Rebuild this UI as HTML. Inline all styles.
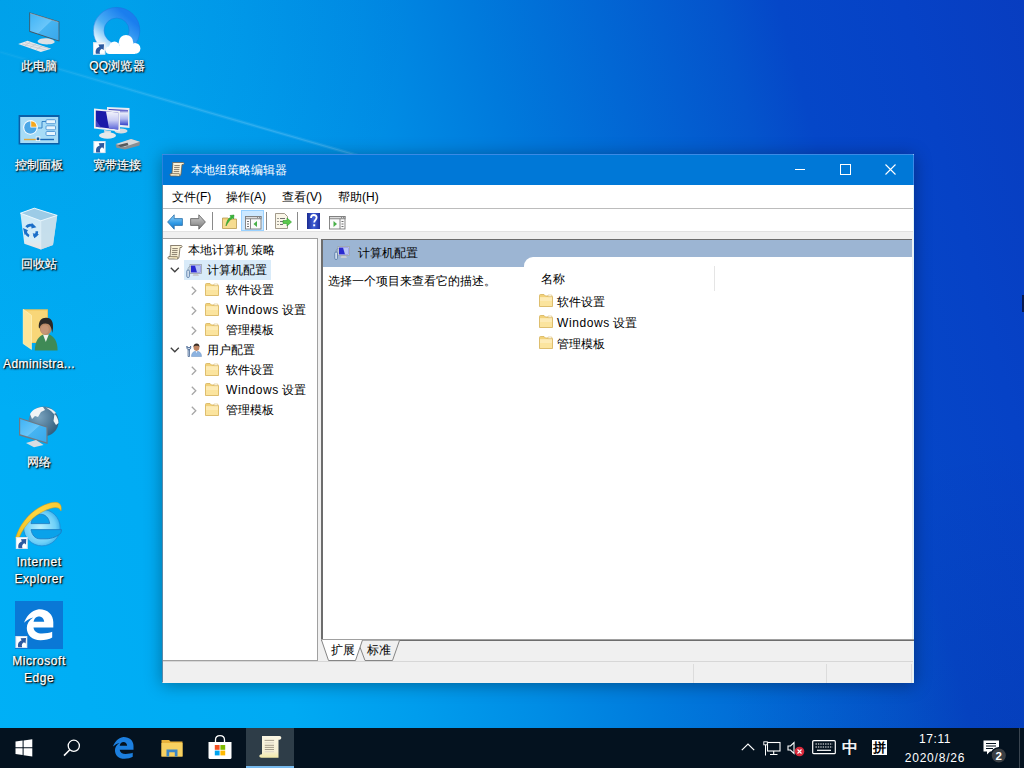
<!DOCTYPE html>
<html><head><meta charset="utf-8">
<style>
*{margin:0;padding:0;box-sizing:border-box}
html,body{width:1024px;height:768px;overflow:hidden}
body{position:relative;font-family:"Liberation Sans",sans-serif;font-size:12px;color:#000;background:#0a78d8}
#bg{position:absolute;left:0;top:0;width:1024px;height:768px;
background:radial-gradient(circle at 0 0,rgba(0,30,110,.08),rgba(0,30,110,0) 420px),radial-gradient(circle at 100% 96%,rgba(0,10,90,.10),rgba(0,10,90,0) 300px),
linear-gradient(75deg,#00b0f6 0%,#00aaf3 25%,#009ded 35%,#008de5 45%,#007adc 55%,#0267d4 65%,#0454cc 75%,#0547c8 80%,#0642c6 90%,#083dc0 100%)}
svg{position:absolute;overflow:visible}
.dl{position:absolute;color:#fff;font-size:12px;line-height:17px;text-align:center;width:80px;white-space:nowrap;
text-shadow:1px 1px 1px #000,1px 1px 2px rgba(0,0,0,.9),0 0 3px rgba(0,0,0,.45);-webkit-text-stroke:0.25px #fff}
#win{position:absolute;left:162px;top:154px;width:752px;height:529px;background:#f0f0f0;border:1px solid #dff4fa;border-left-color:#5a88a8;border-top-color:#3a8ae6;
box-shadow:0 2px 16px rgba(0,0,0,.35)}
#title{position:absolute;left:0;top:0;width:750px;height:30px;background:#0078d7;color:#fff}
#menu{position:absolute;left:0;top:30px;width:750px;height:24px;background:#fff;border-bottom:1px solid #bcbcbc}
#tool{position:absolute;left:0;top:54px;width:750px;height:23px;background:#fff;border-bottom:1px solid #e2e2e2}
#tree{position:absolute;left:0;top:83px;width:155px;height:423px;background:#fff;border:1px solid #a0a0a0;border-left:none}
#right{position:absolute;left:158px;top:84px;width:591px;height:402px;background:#fff;border-left:2px solid #6d6d6d;border-top:1px solid #6d6d6d;overflow:hidden}
#status{position:absolute;left:0;top:506px;width:750px;height:22px;background:#f0f0f0;border-top:1px solid #d7d7d7}
.t{position:absolute;white-space:nowrap;line-height:16px}
#taskbar{position:absolute;left:0;top:728px;width:1024px;height:40px;background:#04121f}
</style></head>
<body>
<div id="bg"></div>
<svg width="1024" height="768" style="left:0;top:0"><defs><linearGradient id="bm" gradientUnits="userSpaceOnUse" x1="0" y1="52" x2="380" y2="162"><stop offset="0" stop-color="#d2f0ff" stop-opacity=".06"/><stop offset=".45" stop-color="#d2f0ff" stop-opacity=".22"/><stop offset="1" stop-color="#d2f0ff" stop-opacity=".26"/></linearGradient></defs><path d="M0 52 L380 162" stroke="url(#bm)" stroke-width="3.5" opacity=".4"/><path d="M0 52 L380 162" stroke="url(#bm)" stroke-width="1.2" opacity=".65"/></svg>
<svg width="1024" height="728" style="left:0;top:0" viewBox="0 0 1024 728">
<defs>
 <symbol id="sc" viewBox="0 0 12 12">
  <rect x="0" y="0" width="12" height="12" fill="#fff"/>
  <rect x="0.5" y="0.5" width="11" height="11" fill="none" stroke="#d8e4f0" stroke-width="1"/>
  <path d="M2.8 11.2 C2 7.5 3.5 5.2 6.2 4.4 L5.2 2.2 L10.6 2 L10.2 7.6 L8.6 6.2 C6.8 7 5.8 9 6.8 11.2 Z" fill="#2d5aa0"/>
 </symbol>
 <linearGradient id="scr" x1="0" y1="0" x2="1" y2="1"><stop offset="0" stop-color="#3fb3f5"/><stop offset="0.5" stop-color="#69c6fa"/><stop offset="0.52" stop-color="#45b4f2"/><stop offset="1" stop-color="#3aa8ea"/></linearGradient>
 <linearGradient id="qqr" x1="0.1" y1="0.9" x2="0.8" y2="0.1"><stop offset="0" stop-color="#e6f6ff"/><stop offset="0.45" stop-color="#4aaef5"/><stop offset="1" stop-color="#1a7eee"/></linearGradient>
 <linearGradient id="bin" x1="0" y1="0" x2="0" y2="1"><stop offset="0" stop-color="#c9e8f6"/><stop offset="0.75" stop-color="#d6eef8"/><stop offset="1" stop-color="#f0e2e0"/></linearGradient>
 <linearGradient id="ier" x1="0" y1="1" x2="1" y2="0"><stop offset="0" stop-color="#f0c020"/><stop offset="0.6" stop-color="#ffd740"/><stop offset="1" stop-color="#f8c830"/></linearGradient>
 <radialGradient id="iee" cx="0.45" cy="0.5" r="0.6"><stop offset="0" stop-color="#b8f0ff"/><stop offset="0.7" stop-color="#6ed0f8"/><stop offset="1" stop-color="#2aa8e8"/></radialGradient>
 <radialGradient id="glb" cx="0.35" cy="0.35" r="0.75"><stop offset="0" stop-color="#7aa4bf"/><stop offset="1" stop-color="#2f5a7a"/></radialGradient>
 <linearGradient id="fgl" x1="0" y1="0" x2="0" y2="1"><stop offset="0" stop-color="#f4f4fc"/><stop offset="0.5" stop-color="#c8ccf4"/><stop offset="1" stop-color="#5a64d8"/></linearGradient>
 <linearGradient id="bsc" x1="0" y1="0" x2="0" y2="1"><stop offset="0" stop-color="#2020b0"/><stop offset="0.25" stop-color="#e8ecfa"/><stop offset="0.6" stop-color="#b0b8f0"/><stop offset="1" stop-color="#3040c8"/></linearGradient>
 <linearGradient id="fsc" x1="0" y1="0" x2="1" y2="1"><stop offset="0" stop-color="#1010b0"/><stop offset="0.55" stop-color="#2030d0"/><stop offset="0.56" stop-color="#c8d0f8"/><stop offset="1" stop-color="#6070e0"/></linearGradient>
</defs>

<!-- This PC -->
<path d="M29.3 12.2 L59.4 21.5 L59.4 41.5 L29.3 31.8 Z" fill="#46535e"/>
<path d="M30.1 13.3 L58.6 22.2 L58.6 40.4 L30.1 31 Z" fill="url(#scr)"/>
<path d="M30.1 13.3 L58.6 22.2" stroke="#a8b4bc" stroke-width="0.6"/>
<path d="M38 40.5 C40 38 47 37.5 52 39.5 C55 40.8 55.5 42.5 53 43.5 C49 45 42 44.5 39 43 C37.5 42.2 37.3 41.2 38 40.5 Z" fill="#dde1e5"/>
<path d="M18.2 44 L27.5 40.8 L51.2 48.7 L40.8 51.9 Z" fill="#e4e8ec"/>
<path d="M22 44 L46 50 M25 42.5 L49 48.5 M30 42 L25 46 M36 44 L30 47.5 M42 46 L36 49.5" stroke="#b8c0c8" stroke-width="0.6" fill="none"/>

<!-- QQ browser -->
<circle cx="116.6" cy="30.6" r="17.9" fill="none" stroke="url(#qqr)" stroke-width="10.8"/>
<circle cx="116.6" cy="30.6" r="23.2" fill="none" stroke="#1a72d8" stroke-width="0.7" opacity=".6"/>
<circle cx="116.6" cy="30.6" r="12.6" fill="none" stroke="#1a72d8" stroke-width="0.7" opacity=".6"/>
<g fill="#fff"><circle cx="126" cy="42.2" r="7.2"/><circle cx="135" cy="48.4" r="5.4"/><circle cx="114.5" cy="47" r="5.4"/><circle cx="109.5" cy="50.2" r="3.8"/><rect x="109.5" y="46" width="25.5" height="8"/></g>
<use href="#sc" x="93" y="42.2" width="12.5" height="12.5"/>

<!-- Control panel -->
<rect x="18.6" y="115" width="41" height="29.5" fill="#0a5fa8"/>
<rect x="20.2" y="117" width="38" height="26" fill="#a7dcf7"/>
<circle cx="30.4" cy="127.5" r="7.2" fill="#fff"/>
<circle cx="30.4" cy="127.5" r="6.2" fill="#4aa6e6"/>
<path d="M30.4 127.5 L30.4 120.3 A7.2 7.2 0 0 1 37.6 127.5 Z" fill="#fff"/>
<path d="M31.2 126.7 L31.2 121.3 A6 6 0 0 1 36.6 126.7 Z" fill="#f5a820"/>
<path d="M38 128 L42 128 L42 121.5 L46 121.5" stroke="#2a78c0" stroke-width="0.9" fill="none"/>
<rect x="46" y="119.7" width="9.5" height="4" rx="1" fill="#e8f5fd" stroke="#3b8ad0" stroke-width="0.8"/>
<rect x="46" y="125.8" width="9.5" height="4" rx="1" fill="#e8f5fd" stroke="#3b8ad0" stroke-width="0.8"/>
<rect x="46" y="131.5" width="9.5" height="4" rx="1" fill="#e8f5fd" stroke="#3b8ad0" stroke-width="0.8"/>
<rect x="24" y="138.8" width="13" height="1.4" fill="#e0a840"/>
<rect x="39.5" y="138.8" width="14.5" height="1.4" fill="#1a6ab8"/>
<rect x="36.2" y="137" width="3.6" height="3.6" fill="#1a5a98" stroke="#fff" stroke-width="0.8"/>

<!-- Broadband -->
<path d="M107 107 L129.5 108 L129.5 128 L107 126 Z" fill="#e8ecf2"/>
<path d="M108.5 109 L128 110 L128 125.5 L108.5 124 Z" fill="url(#bsc)"/>
<ellipse cx="121" cy="131" rx="6.5" ry="2.4" fill="#d8dce0"/>
<path d="M94 108.6 L120 111 L120 131.5 L94 128.5 Z" fill="#eef0f4"/>
<path d="M95.8 110.5 L118.2 112.5 L118.2 129.5 L95.8 126.8 Z" fill="#1a1aa8"/>
<path d="M106 111.4 L118.2 112.5 L118.2 129.5 L109 128.4 Z" fill="url(#fgl)"/>
<path d="M95.8 120 L101 127.4 L95.8 126.8 Z" fill="#5a5ad0" opacity=".7"/>
<path d="M104 130 L111 131 L110.5 134 L104.5 133.5 Z" fill="#d8dce0"/>
<ellipse cx="107.5" cy="135.5" rx="8.5" ry="3.3" fill="#e6e8ea"/>
<path d="M115.6 144.5 L131 139 L140 142 L139.5 145.5 L125 149.6 L116.5 147.8 Z" fill="#8a8e92"/>
<path d="M116 144 L131 139 L139.8 141.8 L124.8 146.8 Z" fill="#d6d9dc"/>
<path d="M118 145 L127.5 142.8 L128.5 145.3 L120.5 147 Z" fill="#55595d"/>
<use href="#sc" x="93.4" y="141" width="12.2" height="12.2"/>

<!-- Recycle bin -->
<path d="M20.4 213.2 L34.3 208.2 L57.2 215.4 L53 245 L40.8 249.4 L24.3 243.7 Z" fill="url(#bin)"/>
<path d="M40.8 220.8 L57.2 215.4 L53 245 L40.8 249.4 Z" fill="#c2dbe8" opacity="0.8"/>
<path d="M20.4 213.2 L34.3 208.2 L57.2 215.4 L40.8 220.8 Z" fill="#9ccbe6" stroke="#f2fbff" stroke-width="0.9"/>
<path d="M40.8 220.8 L40.8 249.4" stroke="#e8f4fa" stroke-width="0.6"/>
<g transform="translate(31.2 231) skewY(8)" fill="none" stroke="#1a6fc8" stroke-width="2.6">
 <path d="M-4.8 -3.2 A5.8 5.8 0 0 1 1.5 -5.6"/>
 <path d="M5.6 -0.5 A5.8 5.8 0 0 1 2.5 5.2"/>
 <path d="M-2.2 5.4 A5.8 5.8 0 0 1 -5.8 0"/>
</g>
<g transform="translate(31.2 231) skewY(8)" fill="#1a6fc8">
 <path d="M0.5 -8.2 L5.2 -4.6 L0.2 -2.6 Z"/>
 <path d="M7.8 2.2 L3.2 6.8 L1.5 2 Z"/>
 <path d="M-6.5 4.8 L-8.2 -1.8 L-3.2 -0.2 Z"/>
</g>

<!-- Administrator -->
<path d="M23.2 309.3 L47.9 309.3 L47.9 343 L23.2 343 Z" fill="#f2c558"/>
<path d="M25 310.5 L47 310.5 L47 342 L25 342 Z" fill="#f8d678"/>
<path d="M23.2 309.3 L31.5 315.4 L31.5 349.4 L23.2 343.7 Z" fill="#fde59a" stroke="#fff6c8" stroke-width="0.6"/>
<path d="M34.8 350.5 C35 341 38.5 336 44 334.2 L48.5 334.2 C54 336 57.6 341 57.6 350.5 Z" fill="#3f8a56"/>
<path d="M43 334.5 L45.8 342 L48.8 334.5 Z" fill="#eef3ef"/>
<ellipse cx="45.8" cy="328.2" rx="6" ry="6.8" fill="#b98a68"/>
<ellipse cx="44.8" cy="329.5" rx="4" ry="4.5" fill="#c9997a" opacity=".8"/>
<path d="M38.8 327.5 C38.2 320.5 42 317.5 46.5 317.8 C51.5 318 53.5 322 53 328.5 L52.2 333 C51.5 326.5 49.5 323.5 45.5 323.5 C42 323.5 40.2 325 39.6 328.5 Z" fill="#2b2826"/>

<!-- Network -->
<circle cx="43.6" cy="421.5" r="15" fill="url(#glb)"/>
<path d="M30 414 C33 409 38 407 43 407 L45 410 L41 412 L38 417 L35 416 L32 419 Z" fill="#f0f4f6"/>
<path d="M46 407.5 C50 408 54 410 56 413 L54 414 L51 411 Z" fill="#e8eef2"/>
<path d="M54.5 414 C57 416 58.5 420 58.5 423 L56 425 L53.5 421 Z" fill="#f0f4f6"/>
<path d="M19 417.5 L47.6 426.8 L47.6 444 L19 435.4 Z" fill="#6a7a88"/>
<path d="M20.2 419 L46.4 427.6 L46.4 442.2 L20.2 434.2 Z" fill="url(#scr)"/>
<path d="M26 443 L36 440 L43.6 445 L34 447.2 Z" fill="#d8dde2"/>

<!-- IE -->
<circle cx="41.9" cy="527.6" r="18.3" fill="url(#iee)" stroke="#1f8fd6" stroke-width="0.9"/>
<path d="M31 523.6 C31.8 517.5 36 514.2 40.5 514.2 C45 514.2 49 517.5 49.7 523.6 Z" fill="#0aa2ea" stroke="#1a78c0" stroke-width="0.8"/>
<path d="M31 529.6 L61.5 529.6 L61 532.8 C57.5 536.5 52 538.8 46 538.8 L40 538.8 C35 538.8 32 535 31 529.6 Z" fill="#0aa2ea" stroke="#1a78c0" stroke-width="0.8"/>
<path d="M15.5 538 C21 520 35 507 50 503 C57.5 501 62.5 503 61 511 C59.5 507.5 56 506.8 51 508.3 C37 512.5 25 523 19 538 Z" fill="url(#ier)" stroke="#d89a10" stroke-width="0.5"/>
<use href="#sc" x="15.7" y="537" width="12" height="12"/>

<!-- Edge -->
<rect x="15" y="601" width="48" height="48" fill="#0a78d6"/>
<path fill-rule="evenodd" d="M24 622.8 C26 617 31 610.5 38.8 609.2 C47.5 609 53.3 614.5 53.3 622 L53.3 627.5 L33.5 627.5 C34 631.5 37.5 633.5 42 633.5 C46 633.5 50 632.8 52.2 631.8 L52.2 637.5 C49.5 639.3 45 640.3 40.5 640.3 C32 640.3 26.8 635 26.8 628 C26.8 624 29 620.2 33.2 617.6 C30 618.3 26.5 620.3 24 622.8 Z M33.6 621.8 L44.2 621.8 C44 618.5 41.8 616.4 39 616.4 C36.2 616.4 34 618.5 33.6 621.8 Z" fill="#fff"/>
<use href="#sc" x="15.4" y="636" width="12" height="12"/>
</svg>
<div class="dl" style="left:-1px;top:58px">此电脑</div>
<div class="dl" style="left:77px;top:58px;letter-spacing:.2px">QQ浏览器</div>
<div class="dl" style="left:-1px;top:157px">控制面板</div>
<div class="dl" style="left:77px;top:157px">宽带连接</div>
<div class="dl" style="left:-1px;top:256px">回收站</div>
<div class="dl" style="left:-1px;top:356px;letter-spacing:.4px">Administra...</div>
<div class="dl" style="left:-1px;top:454px">网络</div>
<div class="dl" style="left:-1px;top:554px;letter-spacing:.55px">Internet<br>Explorer</div>
<div class="dl" style="left:-1px;top:653px;letter-spacing:.55px">Microsoft<br>Edge</div>

<svg width="0" height="0" style="position:absolute">
<defs>
 <symbol id="scroll" viewBox="0 0 16 16">
  <path d="M3.5 1.5 L14 1.5 C15.2 1.5 15.5 3 14.5 3.5 L13 3.5 L12 13 C11.8 14.5 11 15 10 15 L2 15 C0.6 15 0.5 12.6 2 12.6 L3 12.6 L3.8 3 C3.9 2 3.2 1.5 3.5 1.5 Z" fill="#fbf3d8" stroke="#6d6250" stroke-width="0.8"/>
  <path d="M2 12.6 L10 12.6 C11 12.6 11.2 14.6 10 15" fill="#f1e2b5" stroke="#6d6250" stroke-width="0.7"/>
  <path d="M5.3 4.6 H10.8 M5.1 6.6 H10.6 M4.9 8.6 H10.4 M4.7 10.6 H10.2" stroke="#7a6f60" stroke-width="0.9"/>
 </symbol>
 <symbol id="fold" viewBox="0 0 14 13">
  <path d="M0.5 1.5 Q0.5 0.5 1.5 0.5 L5 0.5 L6.5 2 L12.5 2 Q13.5 2 13.5 3 L13.5 12.5 L0.5 12.5 Z" fill="#f2d27a" stroke="#d7b35a" stroke-width="0.8"/>
  <path d="M1 3.2 L13 3.2 L13 12 L1 12 Z" fill="#fbe49e"/>
  <path d="M1 3.2 L13 3.2 L13 7 L1 7 Z" fill="#fdeec0" opacity="0.7"/>
  <path d="M9 1 L12.8 1 L12.8 2.6 L9 2.6 Z" fill="#fff" stroke="#d7b35a" stroke-width="0.5"/>
 </symbol>
 <symbol id="comp" viewBox="0 0 16 14">
  <rect x="4" y="0.5" width="11.5" height="9" fill="#e6e8ec" stroke="#9aa2aa" stroke-width="0.8"/>
  <path d="M5 1.5 L14.5 1.5 L14.5 8.5 L5 8.5 Z" fill="#2a2ad0"/>
  <path d="M9 1.5 L14.5 1.5 L14.5 8.5 L11 8.5 Z" fill="#b8c4f4"/>
  <path d="M7.5 10 L12 10 L13 12 L6.5 12 Z" fill="#c8ccd0"/>
  <rect x="0.8" y="6" width="2.6" height="7.5" rx="1.2" fill="#dce8f4" stroke="#4a70a0" stroke-width="0.8"/>
  <path d="M2 6 C2 3.5 3 2.5 4.5 2.5" stroke="#8090a0" stroke-width="0.7" fill="none"/>
 </symbol>
</defs>
</svg>
<div id="win">
  <div style="position:absolute;left:-1px;top:0;width:1px;height:30px;background:#2a82de"></div><div style="position:absolute;left:750px;top:0;width:1px;height:30px;background:#3a8ae8"></div>
  <div id="title">
    <svg style="left:6px;top:6px" width="16" height="16"><use href="#scroll" width="16" height="16"/></svg>
    <div class="t" style="left:28px;top:7px;color:#fff">本地组策略编辑器</div>
    <svg style="left:632px;top:14px" width="12" height="2"><rect x="0" y="0" width="10" height="1" fill="#fff"/></svg>
    <svg style="left:677px;top:9px" width="12" height="12"><rect x="0.5" y="0.5" width="10" height="10" fill="none" stroke="#fff" stroke-width="1"/></svg>
    <svg style="left:722px;top:9px" width="12" height="12"><path d="M0.5 0.5 L10.5 10.5 M10.5 0.5 L0.5 10.5" stroke="#fff" stroke-width="1.1"/></svg>
  </div>
  <div id="menu">
    <div class="t" style="left:9px;top:4px">文件(F)</div>
    <div class="t" style="left:63px;top:4px">操作(A)</div>
    <div class="t" style="left:119px;top:4px">查看(V)</div>
    <div class="t" style="left:175px;top:4px">帮助(H)</div>
  </div>
  <div id="tool">
    <!-- back -->
    <svg style="left:4px;top:5px" width="16" height="16" viewBox="0 0 16 16">
      <defs><linearGradient id="bk" x1="0" y1="0" x2="0" y2="1"><stop offset="0" stop-color="#9ad6fb"/><stop offset="0.6" stop-color="#2e98e4"/><stop offset="1" stop-color="#1a78c8"/></linearGradient></defs>
      <path d="M0.6 8 L7.2 0.8 L7.2 4.6 L15.4 4.6 L15.4 11.4 L7.2 11.4 L7.2 15.2 Z" fill="url(#bk)" stroke="#2a6ea8" stroke-width="0.8"/>
    </svg>
    <!-- forward -->
    <svg style="left:27px;top:5px" width="16" height="16" viewBox="0 0 16 16">
      <defs><linearGradient id="fw" x1="0" y1="0" x2="0" y2="1"><stop offset="0" stop-color="#d0d0d0"/><stop offset="1" stop-color="#7a7a7a"/></linearGradient></defs>
      <path d="M15.4 8 L8.8 0.8 L8.8 4.6 L0.6 4.6 L0.6 11.4 L8.8 11.4 L8.8 15.2 Z" fill="url(#fw)" stroke="#5c5c5c" stroke-width="0.8"/>
    </svg>
    <div class="abs" style="position:absolute;left:49px;top:3px;width:1px;height:18px;background:#8a8a8a"></div>
    <!-- up folder -->
    <svg style="left:59px;top:5px" width="15" height="15" viewBox="0 0 15 15">
      <path d="M0.5 4 L6 4 L7 5 L14.5 5 L14.5 14.5 L0.5 14.5 Z" fill="#f3d27d" stroke="#b89a50" stroke-width="0.8"/>
      <path d="M1 6 L14 6 L14 14 L1 14 Z" fill="#f6dc90"/>
      <path d="M4 12 C4.5 7 6.5 4 9 3 L8 1.5 L12 1 L11.5 5 L10.5 4 C8.5 5.5 6 8 4 12 Z" fill="#38b838" stroke="#1e8a1e" stroke-width="0.5"/>
    </svg>
    <!-- selected show tree -->
    <div class="abs" style="position:absolute;left:78px;top:1px;width:23px;height:21px;background:#cce8ff;border:1px solid #99d1ff"></div>
    <svg style="left:82px;top:7px" width="17" height="14" viewBox="0 0 17 14">
      <rect x="0.5" y="0.5" width="15.5" height="12.5" fill="#fbfbfb" stroke="#7c7c7c" stroke-width="0.9"/>
      <rect x="0.5" y="0.5" width="15.5" height="2.3" fill="#dcdcdc" stroke="#7c7c7c" stroke-width="0.9"/>
      <path d="M12 1.6 H12.8 M14 1.6 H14.8" stroke="#606060" stroke-width="0.9"/>
      <path d="M5.5 2.8 V13" stroke="#7c7c7c" stroke-width="0.9"/>
      <path d="M2 5.5 H4 M2 8 H4 M2 10.5 H4" stroke="#606060" stroke-width="0.9"/>
      <path d="M12 5 L8.5 8 L12 11 Z" fill="#48b048"/>
    </svg>
    <div class="abs" style="position:absolute;left:103px;top:3px;width:1px;height:18px;background:#8a8a8a"></div>
    <!-- export list -->
    <svg style="left:112px;top:4px" width="17" height="16" viewBox="0 0 17 16">
      <path d="M0.5 0.5 L9.5 0.5 L12.5 3.5 L12.5 15.5 L0.5 15.5 Z" fill="#faf6e8" stroke="#8a8270" stroke-width="0.8"/>
      <path d="M2.5 5.5 H3.5 M2.5 8.5 H3.5 M2.5 11.5 H3.5" stroke="#404040" stroke-width="1"/>
      <path d="M5 5.5 H10 M5 8.5 H8 M5 11.5 H8" stroke="#707070" stroke-width="1"/>
      <path d="M8 7.5 L12 7.5 L12 5 L16.5 9 L12 13 L12 10.5 L8 10.5 Z" fill="#5cc84a" stroke="#2e9a2e" stroke-width="0.6"/>
    </svg>
    <div class="abs" style="position:absolute;left:134px;top:3px;width:1px;height:18px;background:#8a8a8a"></div>
    <!-- help -->
    <svg style="left:144px;top:4px" width="14" height="16" viewBox="0 0 14 16">
      <defs><linearGradient id="hp" x1="0" y1="0" x2="1" y2="0"><stop offset="0" stop-color="#1a2a90"/><stop offset="0.5" stop-color="#4060d8"/><stop offset="1" stop-color="#2030a0"/></linearGradient></defs>
      <rect x="0" y="0" width="13" height="16" fill="url(#hp)"/>
      <path d="M4 5 C4 2.8 5.5 2 6.8 2 C8.5 2 9.6 3 9.6 4.6 C9.6 6.8 7.4 7 7.2 9.5" stroke="#fff" stroke-width="1.8" fill="none"/>
      <rect x="6.2" y="11.3" width="2" height="2" fill="#fff"/>
    </svg>
    <!-- show action pane -->
    <svg style="left:166px;top:7px" width="17" height="14" viewBox="0 0 17 14">
      <rect x="0.5" y="0.5" width="15.5" height="12.5" fill="#fbfbfb" stroke="#7c7c7c" stroke-width="0.9"/>
      <rect x="0.5" y="0.5" width="15.5" height="2.3" fill="#dcdcdc" stroke="#7c7c7c" stroke-width="0.9"/>
      <path d="M12 1.6 H12.8 M14 1.6 H14.8" stroke="#606060" stroke-width="0.9"/>
      <path d="M11 2.8 V13" stroke="#7c7c7c" stroke-width="0.9"/>
      <path d="M12.5 5.5 H14.5 M12.5 8 H14.5 M12.5 10.5 H14.5" stroke="#606060" stroke-width="0.9"/>
      <path d="M4.5 5 L8 8 L4.5 11 Z" fill="#48b048"/>
    </svg>
  </div>
  <div id="tree">
    <svg style="left:4px;top:5px" width="16" height="16"><use href="#scroll" width="16" height="16"/></svg>
    <div class="t" style="left:25px;top:3px">本地计算机 策略</div>
    <div class="abs" style="position:absolute;left:21px;top:21px;width:87px;height:20px;background:#d9ebf9"></div>
    <svg style="left:7px;top:28px" width="10" height="7" viewBox="0 0 10 7"><path d="M0.8 0.8 L4.8 4.8 L8.8 0.8" stroke="#404040" stroke-width="1.3" fill="none"/></svg>
    <svg style="left:23px;top:25px" width="16" height="14"><use href="#comp" width="16" height="14"/></svg>
    <div class="t" style="left:44px;top:23px">计算机配置</div>

    <svg style="left:28px;top:47px" width="7" height="10" viewBox="0 0 7 10"><path d="M0.8 0.8 L4.8 4.8 L0.8 8.8" stroke="#a6a6a6" stroke-width="1.3" fill="none"/></svg>
    <svg style="left:42px;top:44px" width="14" height="13"><use href="#fold" width="14" height="13"/></svg>
    <div class="t" style="left:63px;top:43px">软件设置</div>
    <svg style="left:28px;top:67px" width="7" height="10" viewBox="0 0 7 10"><path d="M0.8 0.8 L4.8 4.8 L0.8 8.8" stroke="#a6a6a6" stroke-width="1.3" fill="none"/></svg>
    <svg style="left:42px;top:64px" width="14" height="13"><use href="#fold" width="14" height="13"/></svg>
    <div class="t" style="left:63px;top:63px"><span style="letter-spacing:0.6px">Windows</span> 设置</div>
    <svg style="left:28px;top:87px" width="7" height="10" viewBox="0 0 7 10"><path d="M0.8 0.8 L4.8 4.8 L0.8 8.8" stroke="#a6a6a6" stroke-width="1.3" fill="none"/></svg>
    <svg style="left:42px;top:84px" width="14" height="13"><use href="#fold" width="14" height="13"/></svg>
    <div class="t" style="left:63px;top:83px">管理模板</div>

    <svg style="left:7px;top:108px" width="10" height="7" viewBox="0 0 10 7"><path d="M0.8 0.8 L4.8 4.8 L0.8 0.8 M0.8 0.8 L4.8 4.8 L8.8 0.8" stroke="#404040" stroke-width="1.3" fill="none"/></svg>
    <svg style="left:23px;top:104px" width="16" height="14" viewBox="0 0 16 14">
      <path d="M5.5 13.5 C5.5 9.8 7.5 8.2 10.5 8.2 C13.5 8.2 15.5 9.8 15.5 13.5 Z" fill="#8db3e0" stroke="#6a90c0" stroke-width="0.5"/>
      <path d="M9.6 8.3 L10.5 10 L11.4 8.3 Z" fill="#fff"/>
      <ellipse cx="10.5" cy="4.6" rx="2.9" ry="3.3" fill="#c08562"/>
      <path d="M7.5 4.3 C7.4 1.8 8.8 0.6 10.6 0.6 C12.6 0.6 13.6 2 13.5 4.3 L12.8 3.2 C11.5 2.6 9.5 2.6 8.2 3.2 Z" fill="#3a2e26"/>
      <path d="M2.8 6.8 L2.8 13" stroke="#2f4f80" stroke-width="2.2" stroke-linecap="round"/>
      <path d="M2.8 6.8 L2.8 13" stroke="#d8e6f4" stroke-width="0.9" stroke-linecap="round"/>
      <path d="M0.9 3.2 C0.6 5.5 1.5 6.8 2.8 6.8 C4.1 6.8 5 5.5 4.7 3.2 L3.9 4.6 L1.7 4.6 Z" fill="#d8e6f4" stroke="#2f4f80" stroke-width="0.8"/>
    </svg>
    <div class="t" style="left:44px;top:103px">用户配置</div>
    <svg style="left:28px;top:127px" width="7" height="10" viewBox="0 0 7 10"><path d="M0.8 0.8 L4.8 4.8 L0.8 8.8" stroke="#a6a6a6" stroke-width="1.3" fill="none"/></svg>
    <svg style="left:42px;top:124px" width="14" height="13"><use href="#fold" width="14" height="13"/></svg>
    <div class="t" style="left:63px;top:123px">软件设置</div>
    <svg style="left:28px;top:147px" width="7" height="10" viewBox="0 0 7 10"><path d="M0.8 0.8 L4.8 4.8 L0.8 8.8" stroke="#a6a6a6" stroke-width="1.3" fill="none"/></svg>
    <svg style="left:42px;top:144px" width="14" height="13"><use href="#fold" width="14" height="13"/></svg>
    <div class="t" style="left:63px;top:143px"><span style="letter-spacing:0.6px">Windows</span> 设置</div>
    <svg style="left:28px;top:167px" width="7" height="10" viewBox="0 0 7 10"><path d="M0.8 0.8 L4.8 4.8 L0.8 8.8" stroke="#a6a6a6" stroke-width="1.3" fill="none"/></svg>
    <svg style="left:42px;top:164px" width="14" height="13"><use href="#fold" width="14" height="13"/></svg>
    <div class="t" style="left:63px;top:163px">管理模板</div>
  </div>
  <div id="right">
    <div class="abs" style="position:absolute;left:0;top:0;width:591px;height:27px;background:#9cb5d3"></div>
    <svg style="left:11px;top:6px" width="16" height="14"><use href="#comp" width="16" height="14"/></svg>
    <div class="t" style="left:35px;top:5px">计算机配置</div>
    <div class="t" style="left:5px;top:33px">选择一个项目来查看它的描述。</div>
    <div class="abs" style="position:absolute;left:201px;top:17px;width:400px;height:400px;background:#fff;border-top-left-radius:9px"></div>
    <div class="abs" style="position:absolute;left:391px;top:26px;width:1px;height:25px;background:#e5e5e5"></div>
    <div class="t" style="left:218px;top:31px">名称</div>
    <svg style="left:216px;top:54px" width="14" height="13"><use href="#fold" width="14" height="13"/></svg>
    <div class="t" style="left:234px;top:54px">软件设置</div>
    <svg style="left:216px;top:75px" width="14" height="13"><use href="#fold" width="14" height="13"/></svg>
    <div class="t" style="left:234px;top:75px"><span style="letter-spacing:0.6px">Windows</span> 设置</div>
    <svg style="left:216px;top:96px" width="14" height="13"><use href="#fold" width="14" height="13"/></svg>
    <div class="t" style="left:234px;top:96px">管理模板</div>
  </div>
  <!-- tabs -->
  <div class="abs" style="position:absolute;left:158px;top:484px;width:593px;height:1px;background:#a0a0a0"></div>
  <div class="abs" style="position:absolute;left:200px;top:485px;width:551px;height:1px;background:#6d6d6d"></div>
  <svg style="left:158px;top:485px" width="80" height="22" viewBox="0 0 80 22">
    <path d="M36.5 0.5 L44 20.5 L71.5 20.5 L78.5 0.5" fill="#f0f0f0" stroke="#858585" stroke-width="1"/>
    <path d="M0.5 0 L7.5 20.5 L34.5 20.5 L41.5 0 Z" fill="#fff"/>
    <path d="M0.5 0 L7.5 20.5 L34.5 20.5 L41.5 0" fill="none" stroke="#858585" stroke-width="1"/>
  </svg>
  <div class="t" style="left:168px;top:487px">扩展</div>
  <div class="t" style="left:204px;top:487px">标准</div>
  <div id="status">
    <div class="abs" style="position:absolute;left:530px;top:2px;width:1px;height:19px;background:#dcdcdc"></div>
    <div class="abs" style="position:absolute;left:663px;top:2px;width:1px;height:19px;background:#dcdcdc"></div>
    <div class="abs" style="position:absolute;left:748px;top:2px;width:1px;height:19px;background:#dcdcdc"></div>
  </div>
</div>

<div style="position:absolute;left:1022px;top:295px;width:2px;height:17px;background:#0a1a50"></div>
<div id="taskbar">
  <!-- start -->
  <svg style="left:15px;top:11px" width="18" height="18" viewBox="0 0 18 18">
    <path d="M0.5 2.6 L7.6 1.6 L7.6 8.3 L0.5 8.3 Z M8.6 1.45 L17.3 0.2 L17.3 8.3 L8.6 8.3 Z M0.5 9.3 L7.6 9.3 L7.6 16 L0.5 15 Z M8.6 9.3 L17.3 9.3 L17.3 17.4 L8.6 16.2 Z" fill="#fff"/>
  </svg>
  <!-- search -->
  <svg style="left:63px;top:11px" width="18" height="18" viewBox="0 0 18 18">
    <circle cx="10.8" cy="6.8" r="5.6" fill="none" stroke="#fff" stroke-width="1.3"/>
    <path d="M6.8 10.8 L1 16.6" stroke="#fff" stroke-width="1.5"/>
  </svg>
  <!-- edge -->
  <svg style="left:112px;top:9px" width="24" height="24" viewBox="0 0 24 24">
    <path transform="translate(1 0) scale(0.7) translate(-24 -609.2)" fill-rule="evenodd" d="M24 622.8 C26 617 31 610.5 38.8 609.2 C47.5 609 53.3 614.5 53.3 622 L53.3 627.5 L33.5 627.5 C34 631.5 37.5 633.5 42 633.5 C46 633.5 50 632.8 52.2 631.8 L52.2 637.5 C49.5 639.3 45 640.3 40.5 640.3 C32 640.3 26.8 635 26.8 628 C26.8 624 29 620.2 33.2 617.6 C30 618.3 26.5 620.3 24 622.8 Z M33.6 621.8 L44.2 621.8 C44 618.5 41.8 616.4 39 616.4 C36.2 616.4 34 618.5 33.6 621.8 Z" fill="#1c7fdf"/>
  </svg>
  <!-- explorer -->
  <svg style="left:161px;top:11px" width="22" height="18" viewBox="0 0 22 18">
    <path d="M0.5 1 L8 1 L9.5 2.5 L21.5 2.5 L21.5 17.5 L0.5 17.5 Z" fill="#e9b33c"/>
    <path d="M0.5 4 L21.5 4 L21.5 17.5 L0.5 17.5 Z" fill="#f7d161"/>
    <path d="M5.5 17.5 L5.5 10.5 L16.5 10.5 L16.5 17.5 L13.8 17.5 L13.8 13.2 L8.2 13.2 L8.2 17.5 Z" fill="#3a86c8"/>
  </svg>
  <!-- store -->
  <svg style="left:208px;top:7px" width="24" height="25" viewBox="0 0 24 25">
    <path d="M7.5 7 L7.5 5 C7.5 1.5 9.5 0.6 12 0.6 C14.5 0.6 16.5 1.5 16.5 5 L16.5 7" fill="none" stroke="#fff" stroke-width="1.3"/>
    <path d="M0.5 7 L23.5 7 L23.5 22.5 Q23.5 24 22 24 L2 24 Q0.5 24 0.5 22.5 Z" fill="#fff"/>
    <rect x="6.8" y="10" width="4.8" height="4.8" fill="#f25022"/>
    <rect x="12.4" y="10" width="4.8" height="4.8" fill="#7fba00"/>
    <rect x="6.8" y="15.6" width="4.8" height="4.8" fill="#00a4ef"/>
    <rect x="12.4" y="15.6" width="4.8" height="4.8" fill="#ffb900"/>
  </svg>
  <!-- active gpedit -->
  <div style="position:absolute;left:246px;top:0;width:48px;height:40px;background:#2e3d48"></div>
  <div style="position:absolute;left:246px;top:38px;width:48px;height:2px;background:#76b9ed"></div>
  <svg style="left:256px;top:5px" width="28" height="28" viewBox="256 733 28 28">
    <defs><linearGradient id="tsc" x1="0" y1="0" x2="0" y2="1"><stop offset="0" stop-color="#fbf6e2"/><stop offset="0.7" stop-color="#f6f0d4"/><stop offset="1" stop-color="#f2e9a8"/></linearGradient></defs>
    <path d="M262 736 L279.5 736 C281.8 736 282 739.5 279.5 739.8 L278.5 739.8 L278.5 757.8 L261.5 757.8 C258.8 757.8 258.5 754.5 261.5 754.3 L262 754.3 Z" fill="url(#tsc)"/>
    <path d="M264.6 740.4 H274.1 M264.8 745.3 H274 M264.8 747.4 H274 M264.8 749.5 H274" stroke="#8e8676" stroke-width="0.8"/>
    <path d="M264.8 742.8 H274 M264.8 751.7 H274" stroke="#d8d0c8" stroke-width="0.8"/>
  </svg>
  <!-- tray -->
  <svg style="left:741px;top:15px" width="14" height="8" viewBox="0 0 14 8"><path d="M0.8 7.2 L7 1 L13.2 7.2" stroke="#fff" stroke-width="1.2" fill="none"/></svg>
  <svg style="left:763px;top:13px" width="18" height="15" viewBox="0 0 18 15">
    <rect x="4.5" y="1.5" width="12.5" height="8.5" fill="none" stroke="#fff" stroke-width="1.1"/>
    <path d="M10.7 10 V13 M7 13.5 H14.5" stroke="#fff" stroke-width="1.1"/>
    <rect x="0.8" y="0.8" width="3.5" height="3" fill="#04121f" stroke="#fff" stroke-width="0.9"/>
    <path d="M2.5 3.8 V14.5" stroke="#fff" stroke-width="1"/>
  </svg>
  <svg style="left:787px;top:13px" width="19" height="16" viewBox="0 0 19 16">
    <path d="M1 5 L3.5 5 L7 1.5 L7 12.5 L3.5 9 L1 9 Z" fill="none" stroke="#fff" stroke-width="1.1"/>
    <circle cx="12.5" cy="10.5" r="4.8" fill="#d8283a"/>
    <path d="M10.5 8.5 L14.5 12.5 M14.5 8.5 L10.5 12.5" stroke="#fff" stroke-width="1.1"/>
  </svg>
  <svg style="left:812px;top:12px" width="24" height="15" viewBox="0 0 24 15">
    <rect x="0.7" y="0.7" width="22.6" height="13" rx="1" fill="none" stroke="#fff" stroke-width="1.2"/>
    <path d="M3.5 4 H20.5 M3.5 7 H20.5" stroke="#fff" stroke-width="1" stroke-dasharray="1.4 1"/>
    <path d="M5 10.3 H19" stroke="#fff" stroke-width="1.2"/>
  </svg>
  <div style="position:absolute;left:842px;top:10px;color:#fff;font-size:16px;line-height:20px;-webkit-text-stroke:0.5px #fff">中</div>
  <div style="position:absolute;left:872px;top:12px;width:15px;height:15px;background:#fff"></div>
  <div style="position:absolute;left:872px;top:11px;width:15px;color:#000;font-size:13px;line-height:17px;text-align:center;font-weight:bold">拼</div>
  <div style="position:absolute;left:890px;top:3px;width:90px;color:#fff;font-size:12px;line-height:17px;text-align:center;letter-spacing:0.6px">17:11</div>
  <div style="position:absolute;left:890px;top:22px;width:90px;color:#fff;font-size:12px;line-height:17px;text-align:center;letter-spacing:0.8px">2020/8/26</div>
  <svg style="left:982px;top:11px" width="28" height="28" viewBox="0 0 28 28">
    <path d="M1.5 1.5 L17 1.5 L17 12.5 L8 12.5 L5 15.5 L5 12.5 L1.5 12.5 Z" fill="#fff"/>
    <path d="M4 4.5 H14 M4 7 H14 M4 9.5 H11" stroke="#04121f" stroke-width="1"/>
    <circle cx="16.8" cy="16.5" r="7.8" fill="#3a3f44" stroke="#04121f" stroke-width="1.5"/>
    <text x="16.8" y="20.6" font-family="Liberation Sans" font-size="11.5" font-weight="bold" fill="#fff" text-anchor="middle">2</text>
  </svg>
  <div style="position:absolute;left:1019px;top:0;width:1px;height:40px;background:#3a4550"></div>
</div>

</body></html>
